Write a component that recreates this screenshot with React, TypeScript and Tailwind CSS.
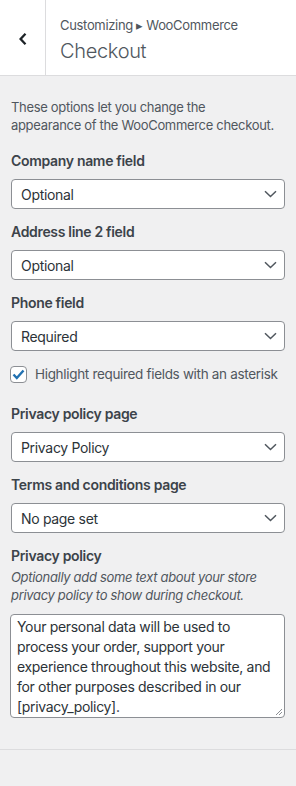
import React from "react"

const font = { fontFamily: "Inter, 'Liberation Sans', sans-serif" }

function Chevron() {
  return (
    <svg width="13" height="8" viewBox="0 0 13 8" fill="none" className="shrink-0">
      <path d="M1 1.2 6.5 6.5 12 1.2" stroke="#50575e" strokeWidth="1.5" />
    </svg>
  )
}

function SelectBox({ value }: { value: string }) {
  return (
    <div className="flex h-[30px] w-full items-center justify-between rounded-[4px] border border-[#8c8f94] bg-white pl-[9px] pr-[7px] text-[14px] text-[#2c3338]">
      <span>{value}</span>
      <Chevron />
    </div>
  )
}

function Field({ label, value }: { label: string; value: string }) {
  return (
    <div className="mb-[14px]">
      <div className="mb-[9px] h-[18px] text-[14px] font-semibold leading-[18px] text-[#3c434a]">{label}</div>
      <SelectBox value={value} />
    </div>
  )
}

export default function App() {
  return (
    <div className="min-h-[786px] w-[296px] bg-[#f0f0f1] tracking-[-0.02em]" style={font}>
      <div className="flex h-[76px] border-b border-[#dcdcde] bg-white">
        <div className="flex w-[46px] items-center justify-center border-r border-[#dcdcde] pt-[2px]">
          <svg width="10" height="14" viewBox="0 0 10 14" fill="none">
            <path d="M7.5 1.8 2.6 7 7.5 12.2" stroke="#1d2327" strokeWidth="2.3" />
          </svg>
        </div>
        <div className="flex flex-col pl-[14px] pt-[16px]">
          <div className="text-[13px] leading-[18px] text-[#50575e]">Customizing ▸ WooCommerce</div>
          <div className="mt-[5px] text-[20px] font-light leading-[24px] text-[#50575e]">Checkout</div>
        </div>
      </div>

      <div className="border-b border-[#dcdcde] px-[11px] pb-[31px] pt-[22px]">
        <p className="mb-[18px] text-[13px] leading-[18px] text-[#50575e]">
          These options let you change the
          <br />
          appearance of the WooCommerce checkout.
        </p>
        <Field label="Company name field" value="Optional" />
        <Field label="Address line 2 field" value="Optional" />
        <Field label="Phone field" value="Required" />

        <label className="mb-[22px] mt-[13px] flex h-[18px] items-center gap-[8px] text-[13.5px] text-[#50575e]">
          <span className="-ml-[1px] flex h-[17px] w-[17px] items-center justify-center rounded-[4px] border border-[#8c8f94] bg-white">
            <svg width="13" height="11" viewBox="0 0 13 11" fill="none">
              <path d="M1.5 5.5 4.8 9 11.5 1.5" stroke="#2271b1" strokeWidth="2.4" />
            </svg>
          </span>
          Highlight required fields with an asterisk
        </label>

        <Field label="Privacy policy page" value="Privacy Policy" />
        <Field label="Terms and conditions page" value="No page set" />

        <div className="h-[18px] text-[14px] font-semibold leading-[18px] text-[#3c434a]">Privacy policy</div>
        <p className="mb-[10px] mt-[3px] text-[13px] italic leading-[18px] text-[#50575e]">
          Optionally add some text about your store privacy policy to show during checkout.
        </p>
        <div className="relative -ml-[1px] h-[104px] w-[275px] rounded-[4px] border border-[#8c8f94] bg-white px-[6px] pt-[2px] text-[14px] leading-[20px] text-[#2c3338]">
          Your personal data will be used to process your order, support your experience throughout this website, and for other purposes described in our [privacy_policy].
          <svg width="8" height="8" viewBox="0 0 8 8" className="absolute bottom-[1px] right-[1px]">
            <path d="M1 7 7 1M4 7 7 4" stroke="#8c8f94" strokeWidth="1" />
          </svg>
        </div>
      </div>
    </div>
  )
}
